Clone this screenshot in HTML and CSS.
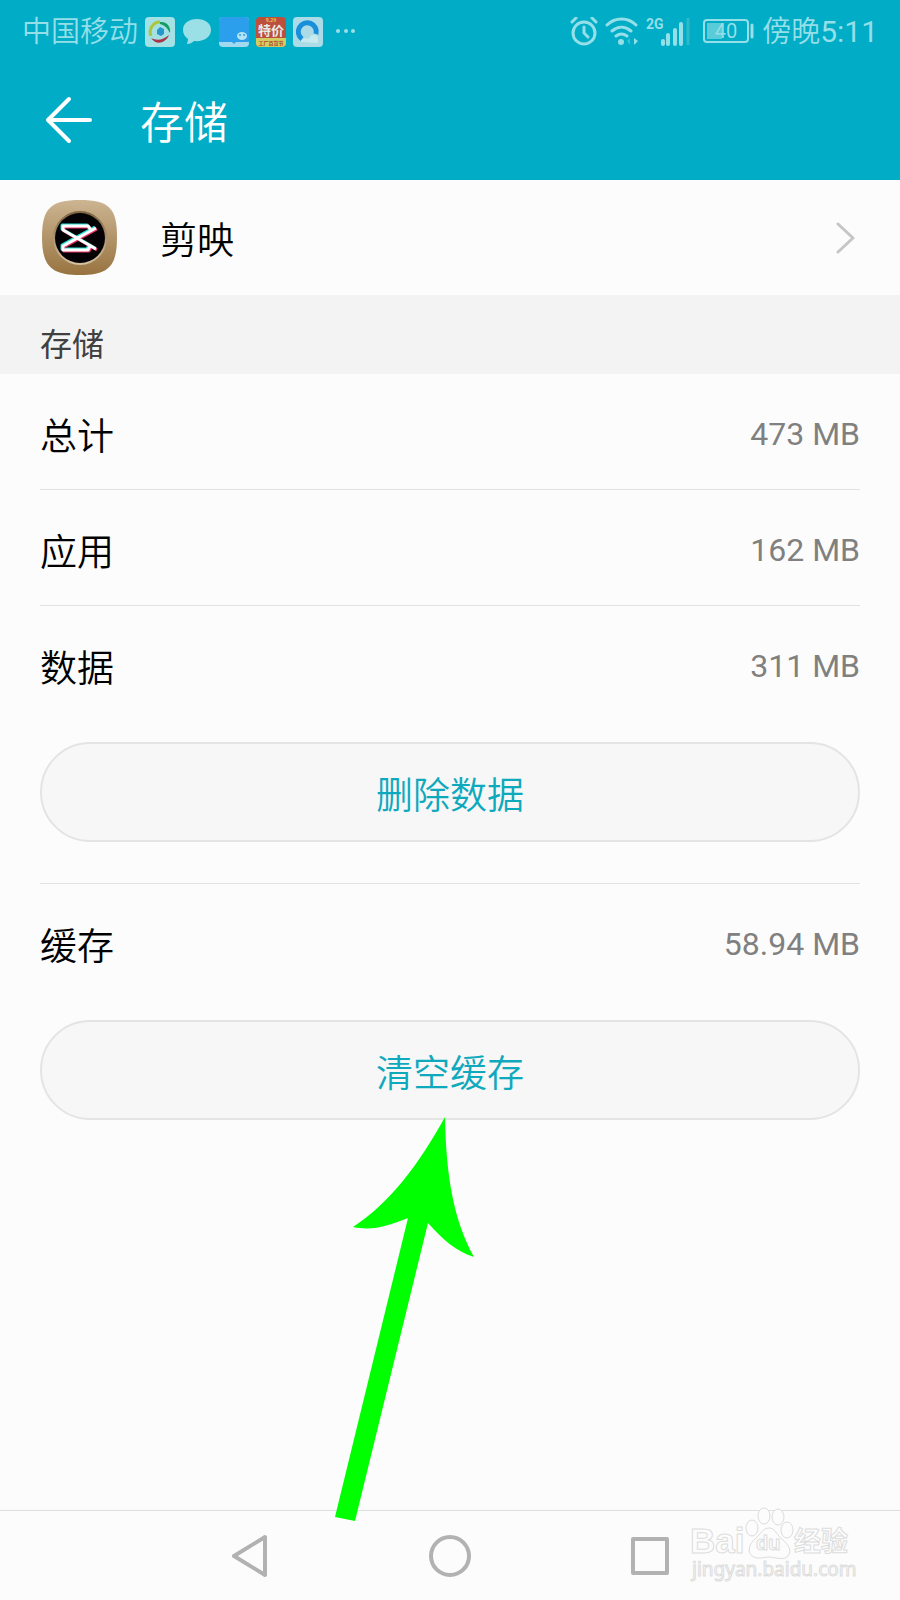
FILE: index.html
```
<!DOCTYPE html>
<html lang="zh-CN">
<head>
    <meta charset="UTF-8">
    <meta name="viewport" content="width=device-width, initial-scale=1.0">
    <title>存储</title>
    <link rel="stylesheet" href="styles.css">
</head>
<body>

<header class="header">
    <div class="status-bar">
        <div class="status-group">
            <span>中国移动</span>
            <svg width="30" height="30" viewBox="0 0 30 30">
                <rect width="30" height="30" rx="4" fill="#a4e1e5"/>
                <path d="M6 19A10 10 0 0 1 15 5" fill="none" stroke="#a9c63c" stroke-width="3"/>
                <path d="M15 5C22 4 26 10 25 16C22 10 19 8 15 7Z" fill="#159c60"/>
                <path d="M6 21C12 24 18 23 24 18C21 26 11 29 6 21Z" fill="#a93648"/>
                <path d="M12 17v-4l3-3 4 2v5l-3 2z" fill="#2597cb"/>
            </svg>
            <svg width="30" height="30" viewBox="0 0 30 30">
                <path d="M15 2C7 2 1 6 1 13c0 4 2 7 5 9 0 2-1 4-1 5 3 0 5-1 7-3 10 1 17-4 17-11S23 2 15 2Z" fill="#9be0e7"/>
            </svg>
            <svg width="30" height="30" viewBox="0 0 30 30">
                <rect width="30" height="30" rx="4" fill="#a2d9ee"/>
                <path d="M0 25V4a4 4 0 0 1 4-4h22a4 4 0 0 1 4 4v21H17l-2 2-2-2Z" fill="#2b9feb"/>
                <ellipse cx="23" cy="19" rx="5" ry="4" fill="#b6e3f4"/>
                <circle cx="21" cy="18" r="1" fill="#2b9feb"/>
                <circle cx="25" cy="18" r="1" fill="#2b9feb"/>
            </svg>
            <svg width="30" height="30" viewBox="0 0 30 30">
                <rect width="30" height="30" rx="4" fill="#bd4f3d"/>
                <path d="M0 21h30v5a4 4 0 0 1-4 4H4a4 4 0 0 1-4-4Z" fill="#d3cc61"/>
                <text x="15" y="5" class="promo-date">9.29</text>
                <text x="15" y="18" class="promo-name">特价</text>
                <text x="15" y="28" class="promo-note">工厂百货节</text>
            </svg>
            <svg width="30" height="30" viewBox="0 0 30 30">
                <rect width="30" height="30" rx="4" fill="#aadbe6"/>
                <path d="M9 22A9 9 0 1 1 23 17" fill="none" stroke="#198fdc" stroke-width="5"/>
                <path d="M8 25c0-3 5-5 8-3 1-5 8-6 9-1v5Z" fill="#c8eaef"/>
            </svg>
            <svg width="30" height="30" viewBox="0 0 30 30">
                <g fill="#9be0e7">
                    <circle cx="8" cy="14" r="2"/>
                    <circle cx="16" cy="14" r="2"/>
                    <circle cx="23" cy="14" r="2"/>
                </g>
            </svg>
        </div>
        <div class="status-group">
            <svg width="28" height="30" viewBox="0 0 28 30" fill="none" stroke="#94dfe8" stroke-width="3" stroke-linecap="round">
                <circle cx="14" cy="16" r="11"/>
                <path d="M14 10v6l4 4M2 5l4-4M26 5l-4-4"/>
            </svg>
            <svg width="34" height="30" viewBox="0 0 34 30" fill="none" stroke="#94dfe8" stroke-width="3" stroke-linecap="round">
                <path d="M2 8C10 0 23 0 31 8M7 14C13 9 20 9 26 14M11 19C15 16 18 16 22 19"/>
                <circle cx="16" cy="25" r="3" fill="#94dfe8" stroke="none"/>
                <path d="M29 21v7l4-4Z" fill="#94dfe8" stroke="none"/>
                <path d="M25 21v7l-3-4Z" fill="#3abfcf" stroke="none"/>
            </svg>
            <svg width="44" height="30" viewBox="0 0 44 30">
                <text x="0" y="12" class="network">2G</text>
                <path d="M17 24v3M22 18v9M29 13v14M35 7v20" stroke="#94dfe8" stroke-width="4" stroke-linecap="round"/>
                <path d="M42 1v27" stroke="#2db9ca" stroke-width="3"/>
            </svg>
            <svg class="battery" width="52" height="30" viewBox="0 0 52 30">
                <rect x="1" y="3" width="44" height="22" rx="3" fill="none" stroke="#94dfe8" stroke-width="2"/>
                <rect x="4" y="6" width="15" height="16" fill="#5acbd8"/>
                <path d="M49 8v12" stroke="#94dfe8" stroke-width="3" stroke-linecap="round"/>
                <text x="23" y="21" class="battery-level">40</text>
            </svg>
            <span>傍晚<span class="clock">5:11</span></span>
        </div>
    </div>
    <div class="title-bar">
        <button class="back" type="button" aria-label="返回">
            <svg width="48" height="48" viewBox="0 0 48 48" fill="none" stroke="#fff" stroke-width="4" stroke-linecap="round" stroke-linejoin="round">
                <path d="M45 24H3M24 3L3 24l21 21"/>
            </svg>
        </button>
        <h1>存储</h1>
    </div>
</header>

<main class="content">
    <a class="app" href="#">
        <svg width="76" height="76" viewBox="0 0 76 76">
            <defs>
                <linearGradient id="gold" x1="0" y1="0" x2="0" y2="1">
                    <stop offset="0" stop-color="#ccb592"/>
                    <stop offset="1" stop-color="#987340"/>
                </linearGradient>
                <linearGradient id="ring" x1="0" y1="0" x2="0" y2="1">
                    <stop offset="0" stop-color="#7d6340"/>
                    <stop offset="1" stop-color="#d5c3a3"/>
                </linearGradient>
            </defs>
            <path d="M38 0C67 0 75 8 75 37S67 75 38 75 0 66 0 37 9 0 38 0Z" fill="url(#gold)"/>
            <circle cx="38" cy="38" r="27" fill="url(#ring)"/>
            <circle cx="38" cy="38" r="25" fill="#050205"/>
            <g fill="none" stroke-width="3" stroke-linejoin="round">
                <path d="M54 28L21 46v4h25l2-4M54 49L21 30v-4h25l3 4" stroke="#29ddd8" transform="translate(-1 -1)"/>
                <path d="M54 28L21 46v4h25l2-4M54 49L21 30v-4h25l3 4" stroke="#e83268" transform="translate(1 1)"/>
                <path d="M54 28L21 46v4h25l2-4M54 49L21 30v-4h25l3 4" stroke="#fff"/>
            </g>
        </svg>
        <span class="app-name">剪映</span>
        <svg width="24" height="36" viewBox="0 0 24 36" fill="none" stroke="#c6c6c6" stroke-width="3" stroke-linecap="round" stroke-linejoin="round">
            <path d="M2 4l15 14L2 32"/>
        </svg>
    </a>

    <h2 class="section">存储</h2>

    <div class="list">
        <div class="item">
            <div class="row"><span>总计</span><span class="value">473 MB</span></div>
        </div>
        <div class="item">
            <div class="row"><span>应用</span><span class="value">162 MB</span></div>
        </div>
        <div class="item item-action">
            <div class="row"><span>数据</span><span class="value">311 MB</span></div>
            <button class="action" type="button">删除数据</button>
        </div>
        <div class="item item-action">
            <div class="row"><span>缓存</span><span class="value">58.94 MB</span></div>
            <button class="action" type="button">清空缓存</button>
            <!-- pointer to the clear cache button -->
            <svg class="pointer" width="140" height="406" viewBox="0 0 140 406">
                <path d="M110 0C111 60 119 104 139 140C122 135 107 122 93 106L20 404L0 400L73 101C52 109 38 114 18 110C55 86 84 47 110 0Z" fill="#00ff00"/>
            </svg>
        </div>
    </div>
</main>

<nav class="nav">
    <button type="button" aria-label="返回">
        <svg width="44" height="44" viewBox="0 0 44 44" fill="none" stroke="#b2b2b2" stroke-width="4" stroke-linejoin="round">
            <path d="M37 3v38L6 22Z"/>
        </svg>
    </button>
    <button type="button" aria-label="主屏幕">
        <svg width="44" height="44" viewBox="0 0 44 44" fill="none" stroke="#b2b2b2" stroke-width="4">
            <circle cx="22" cy="22" r="19"/>
        </svg>
    </button>
    <button type="button" aria-label="最近任务">
        <svg width="44" height="44" viewBox="0 0 44 44" fill="none" stroke="#b2b2b2" stroke-width="4" stroke-linejoin="round">
            <rect x="5" y="5" width="34" height="34"/>
        </svg>
    </button>
    <svg class="watermark" width="170" height="84" viewBox="0 0 170 84">
        <g fill="#fcfcfc" stroke="#dcdcdc" stroke-width="1">
            <ellipse cx="62" cy="26" rx="6" ry="8"/>
            <ellipse cx="74" cy="14" rx="6" ry="8"/>
            <ellipse cx="88" cy="15" rx="6" ry="8"/>
            <ellipse cx="97" cy="28" rx="6" ry="8"/>
            <path d="M79 26C73 26 71 32 65 37S57 50 62 54s12 1 17 1 15 4 19-1 1-11-6-17-7-11-13-11Z"/>
            <text x="0" y="51" class="wm-logo">Bai</text>
            <text x="66" y="48" class="wm-du">du</text>
            <text x="104" y="49" class="wm-cn">经验</text>
            <text x="2" y="74" class="wm-url">jingyan.baidu.com</text>
        </g>
    </svg>
</nav>

</body>
</html>
```

FILE: styles.css
```
* {
    box-sizing: border-box;
}
body {
    margin: 0;
    min-height: 100vh;
    display: flex;
    flex-direction: column;
    background: #fcfcfc;
    color: #000;
    font-family: Roboto, "Noto Sans CJK SC", sans-serif;
    font-size: 37px;
    font-weight: 350;
}
button {
    padding: 0;
    border: 0;
    background: none;
    font: inherit;
    cursor: pointer;
}
svg {
    display: block;
    flex-shrink: 0;
}
h1, h2 {
    margin: 0;
}

/* header */
.header {
    background: #00acc6;
    color: #fff;
}
.status-bar {
    height: 60px;
    padding: 3px 22px 0;
    display: flex;
    align-items: center;
    justify-content: space-between;
    color: #94dfe8;
    font-size: 29px;
    line-height: 40px;
}
.status-group {
    display: flex;
    align-items: center;
    gap: 7px;
}
.battery {
    margin-left: 6px;
}
.clock {
    font-size: 30px;
    font-weight: 400;
}
.network {
    font: bold 14px Roboto, sans-serif;
    fill: #94dfe8;
}
.battery-level {
    font: 20px Roboto, sans-serif;
    fill: #94dfe8;
    text-anchor: middle;
}
.promo-date, .promo-name, .promo-note {
    font-family: "Noto Sans CJK SC", sans-serif;
    font-weight: bold;
    text-anchor: middle;
}
.promo-date {
    font-size: 5px;
    fill: #e0c95a;
}
.promo-name {
    font-size: 13px;
    fill: #e6ecea;
}
.promo-note {
    font-size: 5px;
    fill: #a8452f;
}
.title-bar {
    height: 120px;
    padding: 0 45px;
    display: flex;
    align-items: center;
    gap: 47px;
}
.title-bar h1 {
    font-size: 44px;
    font-weight: 350;
}

/* content */
.content {
    flex: 1;
}
.app {
    height: 115px;
    padding: 0 40px 0 42px;
    display: flex;
    align-items: center;
    color: inherit;
    text-decoration: none;
}
.app-name {
    flex: 1;
    margin-left: 42px;
}
.section {
    height: 79px;
    padding: 18px 40px 0;
    background: #f3f3f3;
    color: #404040;
    font-size: 32px;
    font-weight: 400;
    line-height: 64px;
}
.list {
    padding: 0 40px;
}
.item {
    position: relative;
    border-bottom: 1px solid #e2e2e2;
}
.item:last-child {
    border-bottom: 0;
}
.row {
    height: 115px;
    padding-top: 4px;
    display: flex;
    align-items: center;
    justify-content: space-between;
}
.value {
    color: #808080;
    font-size: 32px;
    font-weight: 400;
}
.item-action {
    padding-bottom: 41px;
}
.action {
    display: block;
    width: 100%;
    height: 100px;
    margin-top: 21px;
    padding-top: 2px;
    border: 2px solid #e4e4e4;
    border-radius: 50px;
    background: #f7f7f7;
    color: #0fa9bd;
}
.pointer {
    position: absolute;
    z-index: 1;
    left: 50%;
    top: 233px;
    margin-left: -115px;
    pointer-events: none;
}

/* navigation */
.nav {
    position: relative;
    height: 90px;
    display: flex;
    justify-content: center;
    border-top: 1px solid #dedede;
}
.nav button {
    width: 200px;
    display: flex;
    align-items: center;
    justify-content: center;
}
.watermark {
    position: absolute;
    right: 40px;
    bottom: 14px;
    pointer-events: none;
}
.wm-logo {
    font: bold 35px "Liberation Sans", sans-serif;
}
.wm-du {
    font: bold 20px "Liberation Sans", sans-serif;
}
.wm-cn {
    font: bold 27px "Noto Sans CJK SC", sans-serif;
}
.wm-url {
    font: 19px "Noto Sans", sans-serif;
}
```
